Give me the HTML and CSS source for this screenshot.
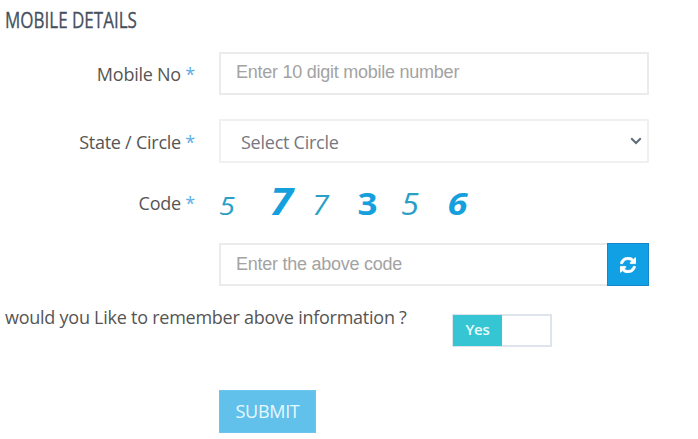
FILE: index.html
```html
<!DOCTYPE html>
<html lang="en">
<head>
    <meta charset="UTF-8">
    <meta name="viewport" content="width=device-width, initial-scale=1.0">
    <title>Mobile Details</title>
    <link rel="stylesheet" href="styles.css">
</head>
<body>

    <form class="mobile-form">
        <h3 class="form-title">MOBILE DETAILS</h3>

        <div class="form-row mobile-row">
            <label class="form-label" for="mobile">Mobile No <span class="required">*</span></label>
            <input class="form-control" id="mobile" type="text" placeholder="Enter 10 digit mobile number">
        </div>

        <div class="form-row circle-row">
            <label class="form-label" for="circle">State / Circle <span class="required">*</span></label>
            <div class="select-wrap">
                <select class="form-control form-select" id="circle">
                    <option>Select Circle</option>
                </select>
                <svg class="select-arrow" width="12" height="8" viewBox="0 0 12 8">
                    <path d="M1.2 1.3L6 6L10.8 1.3" fill="none" stroke="#5f6b7a" stroke-width="2"/>
                </svg>
            </div>
        </div>

        <div class="form-row captcha-row">
            <span class="form-label">Code <span class="required">*</span></span>
            <svg class="captcha" width="260" height="44" viewBox="0 0 260 44">
                <text class="thin" x="0" y="35" font-size="26" textLength="16" lengthAdjust="spacingAndGlyphs">5</text>
                <text class="thick" x="51" y="35" font-size="37" textLength="23" lengthAdjust="spacingAndGlyphs">7</text>
                <text class="thin" x="93" y="35" font-size="28" textLength="17" lengthAdjust="spacingAndGlyphs">7</text>
                <text class="thick upright" x="138.500" y="35" font-size="31" textLength="20" lengthAdjust="spacingAndGlyphs">3</text>
                <text class="thin" x="182" y="35" font-size="31" textLength="18" lengthAdjust="spacingAndGlyphs">5</text>
                <text class="thick" x="228.500" y="35" font-size="31" textLength="20" lengthAdjust="spacingAndGlyphs">6</text>
            </svg>
        </div>

        <div class="form-row code-row">
            <div class="input-group">
                <input class="form-control" type="text" placeholder="Enter the above code">
                <button class="refresh-btn" type="button" aria-label="Refresh code">
                    <svg width="16" height="16" viewBox="0 0 1536 1536">
                        <path fill="#fff" stroke="#fff" stroke-width="50" d="M1511 928q0 5-1 7-64 268-268 434.500T764 1536q-146 0-282.500-55T238 1324l-129 129q-19 19-45 19t-45-19-19-45V960q0-26 19-45t45-19h448q26 0 45 19t19 45-19 45l-137 137q71 66 161 102t187 36q134 0 250-65t186-179q11-17 53-117 8-23 30-23h192q13 0 22.500 9.500t9.500 22.500zm25-800v448q0 26-19 45t-45 19h-448q-26 0-45-19t-19-45 19-45l138-138Q969 256 768 256q-134 0-250 65T332 500q-11 17-53 117-8 23-30 23H50q-13 0-22.500-9.500T18 608v-7q65-268 270-434.500T768 0q146 0 284 55.500T1297 212l130-129q19-19 45-19t45 19 19 45z"/>
                    </svg>
                </button>
            </div>
        </div>

        <div class="remember-row">
            <span class="remember-text">would you Like to remember above information ?</span>
            <div class="switch">
                <span class="switch-on">Yes</span>
            </div>
        </div>

        <button class="submit-btn" type="button">SUBMIT</button>
    </form>

</body>
</html>
```

FILE: styles.css
```css
* {
    box-sizing: border-box;
}

body {
    margin: 0;
    background: #fff;
    color: #555;
    font-family: "Open Sans", "Noto Sans", sans-serif;
    font-size: 18px;
    letter-spacing: -0.25px;
    overflow: hidden;
}

.mobile-form {
    width: 649px;
}

/* Narrow heading */
.form-title {
    width: max-content;
    height: 40px;
    margin: 0 0 12px 5px;
    color: #46505e;
    font-size: 21px;
    font-weight: 500;
    letter-spacing: 0;
    line-height: 41px;
    -webkit-text-stroke: 0.3px #46505e;
    transform: scaleX(0.81);
    transform-origin: left;
}

/* Label + field */
.form-row {
    display: grid;
    grid-template-columns: 195px 430px;
    column-gap: 24px;
    align-items: center;
}

.form-label {
    padding-top: 1px;
    text-align: right;
    line-height: 24px;
    white-space: nowrap;
}

.required {
    color: #5baee8;
}

.form-control {
    width: 100%;
    height: 43px;
    padding: 0 15px 2px;
    border: 2px solid #ebebeb;
    border-radius: 1px;
    background: #fff;
    font-family: "Liberation Sans", Arial, sans-serif;
    font-size: 18px;
    letter-spacing: -0.25px;
    outline: none;
}

.form-control::placeholder {
    color: #a3a3a3;
    opacity: 1;
}

.circle-row {
    margin-top: 24px;
}

.select-wrap {
    position: relative;
    height: 44px;
}

.form-select {
    height: 44px;
    padding: 1px 20px 0;
    border-color: #f0f0f0;
    color: #77777f;
    font-family: "Open Sans", "Noto Sans", sans-serif;
    appearance: none;
}

.select-arrow {
    position: absolute;
    top: 18px;
    right: 7px;
}

/* Captcha digits */
.captcha-row {
    height: 44px;
    margin-top: 17px;
}

.captcha {
    display: block;
    overflow: visible;
    letter-spacing: 0;
}

.thin {
    fill: #2b9fc5;
    font-style: italic;
}

.thick {
    fill: #159fdc;
    font-style: italic;
    font-weight: 700;
}

.upright {
    font-style: normal;
}

.code-row {
    margin-top: 19px;
}

.input-group {
    display: flex;
    grid-column: 2;
}

.input-group .form-control {
    flex: 1;
    padding-bottom: 0;
    border-right: 0;
}

.refresh-btn {
    display: flex;
    align-items: center;
    justify-content: center;
    width: 42px;
    height: 43px;
    padding: 0;
    border: 1px solid #1686ca;
    background: #10a0e3;
}

/* Remember switch */
.remember-row {
    display: flex;
    align-items: flex-start;
    height: 104px;
    padding-left: 5px;
}

.remember-text {
    width: 447px;
    padding-top: 19px;
    line-height: 24px;
    white-space: nowrap;
}

.switch {
    width: 100px;
    height: 33px;
    margin-top: 28px;
    border: 2px solid #dfe3eb;
}

.switch-on {
    display: block;
    width: 49px;
    height: 31px;
    margin: -1px 0 0 -1px;
    background: #36c6d3;
    color: #e6fbfc;
    font-size: 15px;
    font-weight: 600;
    line-height: 29px;
    text-align: center;
}

.submit-btn {
    display: block;
    width: 97px;
    height: 43px;
    margin-left: 219px;
    padding: 0 0 2px;
    border: 1px solid #6bc5ee;
    background: #61c1eb;
    color: #e8f8ff;
    font-family: "Open Sans", "Noto Sans", sans-serif;
    font-size: 18px;
    font-weight: 500;
    letter-spacing: -0.3px;
}
```
